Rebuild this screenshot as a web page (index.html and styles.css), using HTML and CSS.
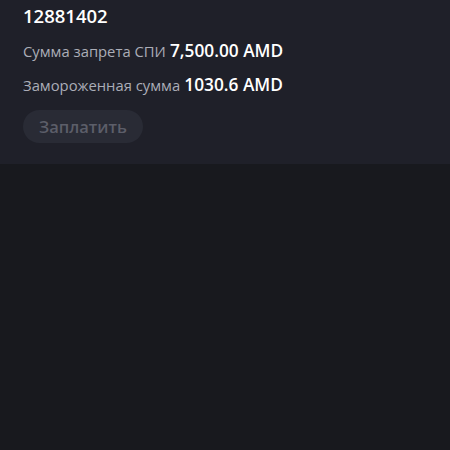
FILE: index.html
```html
<!DOCTYPE html>
<html lang="ru">
<head>
  <meta charset="UTF-8" />
  <meta name="viewport" content="width=device-width, initial-scale=1.0"/>
  <title>Запрет СПИ</title>
  <link rel="stylesheet" href="styles.css">
</head>
<body>
  <div class="card">
    <div class="number">12881402</div>
    <div class="row">
      <span class="label">Сумма запрета СПИ</span>
      <span class="value">7,500.00 AMD</span>
    </div>
    <div class="row">
      <span class="label">Замороженная сумма</span>
      <span class="value">1030.6 AMD</span>
    </div>
    <button class="pay" disabled>Заплатить</button>
  </div>
</body>
</html>
```

FILE: styles.css
```css
* {
  box-sizing: border-box;
  font-family: 'Open Sans', 'Noto Sans', sans-serif;
}

body {
  margin: 0;
  padding: 0;
  background: #18191e;
  color: #fff;
  height: 100vh;
}

.card {
  background: #1f2029;
  padding: 3px 23px 22px;
  height: 164px;
}

.number {
  font-size: 18.5px;
  font-weight: 600;
  line-height: 26px;
  color: #fff;
}

.row {
  margin-top: 10px;
  line-height: 24px;
}

.row + .row {
  margin-top: 10px;
}

.label {
  font-size: 14.8px;
  color: #abadb7;
}

.value {
  font-size: 17.3px;
  font-weight: 600;
  color: #fff;
}

.pay {
  margin-top: 13px;
  height: 33px;
  padding: 0 16px;
  border: none;
  border-radius: 17px;
  background: #292b35;
  color: #5c5e69;
  font-size: 16.5px;
  font-weight: 600;
}
```
